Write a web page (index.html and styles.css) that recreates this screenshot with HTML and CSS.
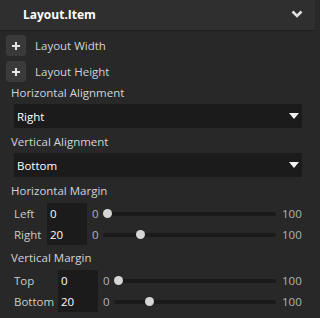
FILE: index.html
```html
<!DOCTYPE html>
<html lang="en">
<head>
  <meta charset="UTF-8" />
  <title>Layout.Item</title>
  <link rel="stylesheet" href="styles.css">
</head>
<body>

<div class="panel">
  <header class="panel-head">
    <h1>Layout.Item</h1>
    <svg class="chevron" width="12" height="8" viewBox="0 0 12 8">
      <path d="M1.5 1.5 L6 6 L10.5 1.5" fill="none" stroke="#e0e0e0" stroke-width="2.6"/>
    </svg>
  </header>

  <div class="body">
    <div class="add-row">
      <span class="add-btn">
        <svg width="8" height="8" viewBox="0 0 8 8"><path d="M4 0 V8 M0 4 H8" stroke="#e6e6e6" stroke-width="2"/></svg>
      </span>
      <span>Layout Width</span>
    </div>
    <div class="add-row">
      <span class="add-btn">
        <svg width="8" height="8" viewBox="0 0 8 8"><path d="M4 0 V8 M0 4 H8" stroke="#e6e6e6" stroke-width="2"/></svg>
      </span>
      <span>Layout Height</span>
    </div>

    <div class="label">Horizontal Alignment</div>
    <div class="select">
      <span>Right</span>
      <svg width="10" height="6" viewBox="0 0 10 6"><polygon points="0,0 10,0 5,6" fill="#f2f2f2"/></svg>
    </div>

    <div class="label">Vertical Alignment</div>
    <div class="select">
      <span>Bottom</span>
      <svg width="10" height="6" viewBox="0 0 10 6"><polygon points="0,0 10,0 5,6" fill="#f2f2f2"/></svg>
    </div>

    <div class="label">Horizontal Margin</div>
    <div class="margins narrow">
      <span class="side">Left</span>
      <span class="num">0</span>
      <span class="min">0</span>
      <span class="track"><i class="thumb" style="--v: 0"></i></span>
      <span class="max">100</span>

      <span class="side">Right</span>
      <span class="num">20</span>
      <span class="min">0</span>
      <span class="track"><i class="thumb" style="--v: 0.2"></i></span>
      <span class="max">100</span>
    </div>

    <div class="label">Vertical Margin</div>
    <div class="margins wide">
      <span class="side">Top</span>
      <span class="num">0</span>
      <span class="min">0</span>
      <span class="track"><i class="thumb" style="--v: 0"></i></span>
      <span class="max">100</span>

      <span class="side">Bottom</span>
      <span class="num">20</span>
      <span class="min">0</span>
      <span class="track"><i class="thumb" style="--v: 0.2"></i></span>
      <span class="max">100</span>
    </div>
  </div>
</div>

</body>
</html>
```

FILE: styles.css
```css
* {
  box-sizing: border-box;
  font-family: 'Open Sans', 'Noto Sans', sans-serif;
}

body {
  margin: 0;
  background-color: #282828;
  color: #d2d2d2;
  font-size: 11.5px;
}

.panel {
  width: 320px;
  height: 318px;
  overflow: hidden;
}

.panel-head {
  width: 315px;
  height: 31px;
  background-color: #2f2f2f;
  border-bottom: 1px solid #1f1f1f;
  display: flex;
  align-items: center;
  justify-content: space-between;
  padding: 0 12px 2px 23px;
}

.panel-head h1 {
  margin: 0;
  font-size: 12px;
  font-weight: 700;
  color: #ffffff;
}

.body {
  padding: 4px 0 0 6px;
}

.add-row {
  display: flex;
  align-items: center;
  gap: 9px;
  height: 21px;
  margin-bottom: 5px;
  color: #cfd3d8;
}

.add-row + .label {
  margin-top: -3px;
}

.add-btn {
  width: 20px;
  height: 21px;
  border-radius: 3px;
  background-color: #3a3a3a;
  display: flex;
  align-items: center;
  justify-content: center;
}

.label {
  padding-left: 5px;
  height: 18px;
  line-height: 18px;
  color: #d0d4d8;
}

.select {
  margin: 2px 0 5px 8px;
  width: 288px;
  height: 24px;
  background-color: #1b1b1b;
  display: flex;
  align-items: center;
  justify-content: space-between;
  padding: 0 3px 0 3px;
  color: #ffffff;
}

.select + .label {
  margin-top: 1px;
}

.margins {
  display: grid;
  grid-template-rows: 21px 21px;
  align-items: center;
  margin: 3px 0 4px 8px;
  width: 286px;
  color: #c8ccd0;
}

.margins.narrow {
  grid-template-columns: 33px 40px 16px 1fr 24px;
}

.margins.wide {
  grid-template-columns: 44px 40px 16px 1fr 24px;
}

.num {
  background-color: #1b1b1b;
  height: 21px;
  line-height: 21px;
  padding-left: 3px;
  color: #ffffff;
}

.min {
  padding-left: 5px;
  color: #b0b4b8;
}

.track {
  position: relative;
  height: 4px;
  border-radius: 2px;
  background-color: #1a1a1a;
}

.thumb {
  position: absolute;
  top: -2.5px;
  left: calc((100% - 9px) * var(--v));
  width: 9px;
  height: 9px;
  border-radius: 50%;
  background-color: #d6d6d6;
}

.max {
  padding-left: 6px;
  color: #b0b4b8;
}
```
